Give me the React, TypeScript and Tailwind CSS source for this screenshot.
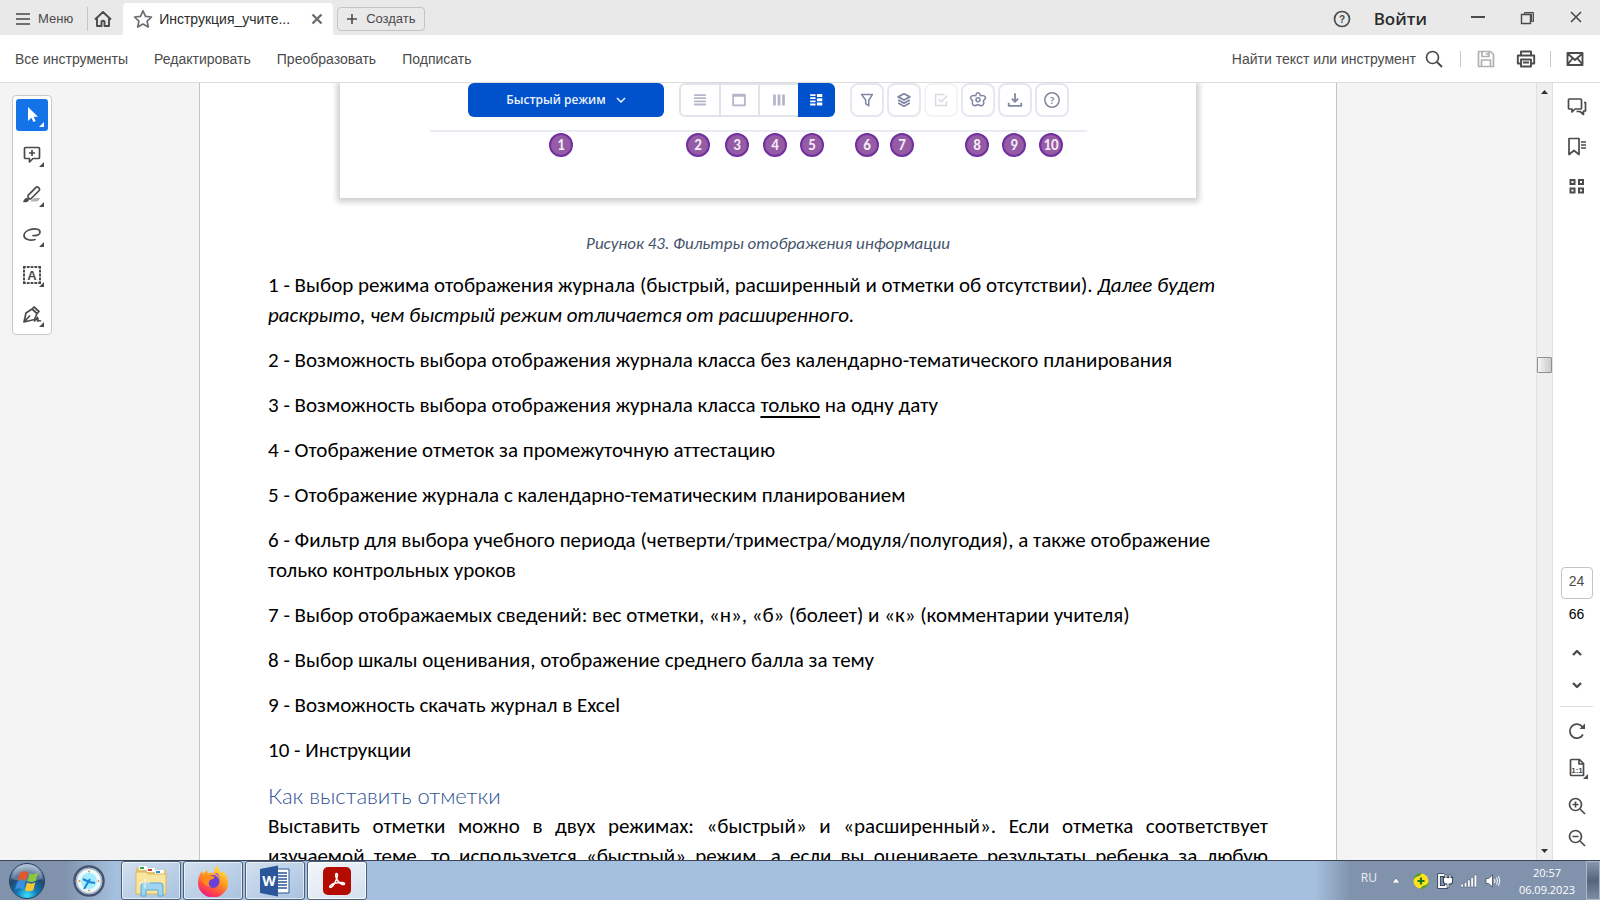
import React from 'react';

type IconProps = { children: React.ReactNode; size?: number; className?: string };

const Icon: React.FC<IconProps> = ({ children, size = 20, className = '' }) => (
  <svg
    width={size}
    height={size}
    viewBox="0 0 20 20"
    fill="none"
    stroke="currentColor"
    strokeWidth="1.7"
    strokeLinejoin="round"
    className={`shrink-0 ${className}`}
    aria-hidden="true"
  >
    {children}
  </svg>
);

const menuItems = ['Все инструменты', 'Редактировать', 'Преобразовать', 'Подписать'];

// Left floating palette
const tools = [
  {
    label: 'Выделение',
    icon: <path d="M6 2v14l3.300-3.200L11.500 17l2.200-1-2-4.200H16z" fill="currentColor" stroke="none" />,
  },
  {
    label: 'Комментарий',
    icon: (
      <>
        <path d="M3.500 2.500h13q1 0 1 1v9q0 1-1 1h-5.500L7.500 17v-3.500h-4q-1 0-1-1v-9q0-1 1-1z" />
        <path d="M10 5v6M7 8h6" />
      </>
    ),
  },
  {
    label: 'Маркер',
    icon: (
      <>
        <path d="M8 16.500l4-3.500h6.500l-3 3.500z" fill="#b3b3b3" stroke="none" />
        <path d="M6.300 10.200L14 2.300q1.200-.9 2.200 0l1 1q.9 1.100 0 2.200l-8 8q-1.200.8-2.200 0l-.7-.8q-.9-1.200 0-2.500z" />
        <path d="M1 17q1.500-4.500 4.300-4 2.200.8 1.200 3-1.500 1.800-5.500 1z" fill="currentColor" stroke="none" />
      </>
    ),
  },
  {
    label: 'Рисование',
    icon: <path d="M11 10.500c4 .5 7-.5 7-3.500 0-3-4-3.500-8-2.800-4 .7-8 3-8 6.300 0 4 6 5.500 11 4" strokeLinecap="round" />,
  },
  {
    label: 'Текст',
    icon: (
      <>
        <path d="M1 2h18M1 18h18" strokeDasharray="2.800 1" strokeWidth="2" />
        <path d="M2 1v18M18 1v18" strokeDasharray="2.800 1" strokeWidth="2" />
        <text x="10" y="14.500" textAnchor="middle" fontSize="13" fontWeight="700" fill="currentColor" stroke="none">
          A
        </text>
      </>
    ),
  },
  {
    label: 'Подпись',
    icon: (
      <>
        <path d="M2 17l2-9 6-4 5 4.500-2.500 6zM2 17l6-6.500M10 4l2-2 5 4.500-2 2" />
        <path d="M12 16.500q3-3 3.500-4 1 1 0 3.500 1.500-.5 3.500 0" />
      </>
    ),
  },
];

const callouts = [
  { n: 1, x: 221 },
  { n: 2, x: 358 },
  { n: 3, x: 397 },
  { n: 4, x: 435 },
  { n: 5, x: 472 },
  { n: 6, x: 527 },
  { n: 7, x: 562 },
  { n: 8, x: 637 },
  { n: 9, x: 674 },
  { n: 10, x: 711 },
];

const viewButtons = [
  { label: 'Список', icon: <path d="M3.500 4.500h13M3.500 8h13M3.500 11.500h13M3.500 15h13" strokeWidth="2" /> },
  { label: 'Дата', icon: <path d="M3.500 4h13v12h-13zM3.500 5.500h13" strokeWidth="2" /> },
  { label: 'Аттестация', icon: <path d="M5 4v12M10 4v12M15 4v12" strokeWidth="3" /> },
  {
    label: 'Журнал с планированием',
    icon: (
      <>
        <path d="M3.500 4.500h6M3.500 8h6M3.500 11.500h6M3.500 15h6" strokeWidth="2" />
        <path d="M11 5h6M11 9.800h6M11 14.500h6" strokeWidth="3.400" />
      </>
    ),
  },
];

const actionButtons = [
  { label: 'Фильтр', icon: <path d="M4 4h12l-4 6v6.500L8.500 14v-4z" /> },
  {
    label: 'Сведения',
    icon: <path d="M10 3l6.500 3.500L10 10 3.500 6.500zM3.500 10l6.500 3.500 6.500-3.500M3.500 13.300L10 17l6.500-3.700" strokeWidth="2" />,
  },
  { label: 'Контроль', icon: <path d="M14 4H4v12h12v-5M7.500 9l3 3L17 5" />, faded: true },
  {
    label: 'Шкала',
    icon: (
      <>
        <path d="M10 2q1.800 0 2.500 3.200 4.500-.7 5.500 1.300t-2 4.300q1 3.700-.8 5T10 15q-3.500 2-5.200.8T4 10.800Q1 8.500 2 6.500t5.500-1.300Q8.200 2 10 2z" />
        <circle cx="10" cy="9.800" r="2.200" />
      </>
    ),
  },
  { label: 'Скачать', icon: <path d="M10 2.500V12M6.500 8.500L10 12l3.500-3.500M3 13v3.500h14V13" strokeWidth="2" /> },
  {
    label: 'Инструкции',
    icon: (
      <>
        <circle cx="10" cy="10" r="8" />
        <text x="10" y="14" textAnchor="middle" fontSize="12" fontWeight="700" fill="currentColor" stroke="none">
          ?
        </text>
      </>
    ),
  },
];

const paragraphs: React.ReactNode[] = [
  <>
    1 - Выбор режима отображения журнала (быстрый, расширенный и отметки об отсутствии).{' '}
    <em>
      Далее будет
      <br />
      раскрыто, чем быстрый режим отличается от расширенного.
    </em>
  </>,
  '2 - Возможность выбора отображения журнала класса без календарно-тематического планирования',
  <>
    3 - Возможность выбора отображения журнала класса <u className="underline-offset-4">только</u> на одну дату
  </>,
  '4 - Отображение отметок за промежуточную аттестацию',
  '5 - Отображение журнала с календарно-тематическим планированием',
  <>
    6 - Фильтр для выбора учебного периода (четверти/триместра/модуля/полугодия), а также отображение
    <br />
    только контрольных уроков
  </>,
  '7 - Выбор отображаемых сведений: вес отметки, «н», «б» (болеет) и «к» (комментарии учителя)',
  '8 - Выбор шкалы оценивания, отображение среднего балла за тему',
  '9 - Возможность скачать журнал в Excel',
  '10 - Инструкции',
];

const TitleBar = () => (
  <header className="flex h-[35px] shrink-0 items-end bg-[#e9e9e9] text-[#4b4b4b]">
    <button className="ml-4 flex h-8 items-center gap-2 text-[13px]">
      <svg width="14" height="14" viewBox="0 0 14 14" stroke="#6e6e6e" strokeWidth="2" aria-hidden="true">
        <path d="M0 2h14M0 7h14M0 12h14" />
      </svg>
      Меню
    </button>
    <span className="mb-1 ml-[14px] h-6 w-px bg-[#c6c6c6]" />
    <button className="ml-[5px] flex h-8 items-center" aria-label="Главная">
      <Icon>
        <path d="M2 10.500L10 3l8 7.500M4 9.500v7.500h4.500v-4.500q1.500-1.500 3 0V17H16V9.500" strokeWidth="1.900" />
      </Icon>
    </button>
    <div className="ml-[10px] flex h-8 w-[210px] items-center rounded-t-[4px] bg-white pr-2 pl-[10px]">
      <Icon className="text-[#6e6e6e]">
        <path d="M10 1.800l2.500 5.500 6 .7-4.400 4.100 1.200 5.900-5.300-3-5.300 3 1.200-5.900L1.500 8l6-.7z" />
      </Icon>
      <span className="ml-[6px] flex-1 truncate text-sm text-[#2c2c2c]">Инструкция_учите...</span>
      <button aria-label="Закрыть вкладку" className="flex">
        <svg width="16" height="16" viewBox="0 0 16 16" stroke="#6e6e6e" strokeWidth="2.400" aria-hidden="true">
          <path d="M3.500 3.500l9 9M12.500 3.500l-9 9" />
        </svg>
      </button>
    </div>
    <button className="mb-1 ml-1 flex h-6 items-center gap-2 rounded-[4px] border border-[#c4c4c4] px-2 text-[13px]">
      <svg width="12" height="12" viewBox="0 0 12 12" stroke="currentColor" strokeWidth="1.600" aria-hidden="true">
        <path d="M6 1v10M1 6h10" />
      </svg>
      Создать
    </button>
    <div className="ml-auto flex h-8 items-center pr-4">
      <button aria-label="Справка" className="flex">
        <Icon>
          <circle cx="10" cy="10" r="7.500" />
          <text x="10" y="13.500" textAnchor="middle" fontSize="10" fontWeight="700" fill="currentColor" stroke="none">
            ?
          </text>
        </Icon>
      </button>
      <button className="ml-[22px] font-['Open_Sans',sans-serif] text-[17px] font-semibold text-[#2c2c2c]">Войти</button>
      <button aria-label="Свернуть" className="ml-[43px] flex">
        <svg width="16" height="16" viewBox="0 0 16 16" stroke="currentColor" strokeWidth="2" aria-hidden="true">
          <path d="M1 6h14" />
        </svg>
      </button>
      <button aria-label="Развернуть" className="ml-[34px] flex">
        <svg width="16" height="16" viewBox="0 0 16 16" fill="none" stroke="currentColor" aria-hidden="true">
          <path d="M4.500 1.500h9v9h-2v-7h-7z" fill="#a9a9a9" />
          <path d="M1.500 3.500h9v9h-9z" strokeWidth="1.400" />
        </svg>
      </button>
      <button aria-label="Закрыть" className="ml-8 flex">
        <svg width="16" height="16" viewBox="0 0 16 16" stroke="currentColor" strokeWidth="1.600" aria-hidden="true">
          <path d="M3 1l10 10M13 1L3 11" />
        </svg>
      </button>
    </div>
  </header>
);

const Toolbar = () => (
  <nav className="flex h-12 shrink-0 items-center border-b border-[#dcdcdc] bg-white pr-[15px] pl-[15px] text-[#4b4b4b]">
    <div className="flex gap-[26px] text-sm">
      {menuItems.map(item => (
        <button key={item}>{item}</button>
      ))}
    </div>
    <div className="ml-auto flex items-center">
      <button className="flex items-center gap-2 text-sm">
        Найти текст или инструмент
        <Icon>
          <circle cx="8.500" cy="8.500" r="6" />
          <path d="M13 13l5 5" strokeWidth="2" />
        </Icon>
      </button>
      <span className="ml-4 h-4 w-px bg-[#c6c6c6]" />
      <button aria-label="Сохранить" className="ml-[15px] flex text-[#b1b1b1]" disabled>
        <Icon>
          <path d="M2.500 2.500h12l3 3v12h-15zM6 2.500v5h7v-5M5.500 17.500v-6.500h9v6.500M11 4v2" />
        </Icon>
      </button>
      <button aria-label="Печать" className="ml-5 flex">
        <Icon>
          <path d="M5 6V2.500h10V6M5 14.500H1.800V6.500h16.400v8H15M5 10.500h10v7H5zM7 13.500h6" strokeWidth="1.900" />
        </Icon>
      </button>
      <span className="ml-[14px] h-4 w-px bg-[#c6c6c6]" />
      <button aria-label="Отправить" className="ml-[14px] flex">
        <Icon>
          <path d="M2.500 4h15v12h-15zM2.500 4.500l7.500 6.500 7.500-6.500M2.500 15.500l5-6M17.500 15.500l-5-6" strokeWidth="1.900" />
        </Icon>
      </button>
    </div>
  </nav>
);

const ToolPalette = () => (
  <aside className="absolute top-3 left-3 flex w-10 flex-col gap-2 rounded-[4px] border border-[#c9c9c9] bg-white p-[3px]">
    {tools.map((tool, i) => (
      <button
        key={tool.label}
        aria-label={tool.label}
        className={
          i === 0
            ? 'relative flex h-8 items-center justify-center rounded-[3px] bg-[#1473e6] text-white'
            : 'relative flex h-8 items-center justify-center text-[#4b4b4b]'
        }
      >
        <Icon>{tool.icon}</Icon>
        <svg width="5" height="5" viewBox="0 0 5 5" className="absolute right-1 bottom-1" fill="currentColor" aria-hidden="true">
          <path d="M5 0v5H0z" />
        </svg>
      </button>
    ))}
  </aside>
);

const Figure = () => (
  <figure className="text-center">
    <div className="relative mx-auto h-[115px] max-w-[856px] bg-white shadow-[0_1px_6px_3px_rgba(0,0,0,0.2)]">
      <div className="mr-[109px] ml-[90px] flex h-[49px] items-start border-b-2 border-[#ebebf3] pl-[38px]">
        <button className="flex h-[34px] w-[196px] shrink-0 items-center justify-center gap-[10px] rounded-[6px] bg-[#0052cc] font-['Open_Sans',sans-serif] text-[12px] font-semibold text-[#e9f0fb]">
          Быстрый режим
          <svg width="10" height="6" viewBox="0 0 10 6" fill="none" stroke="currentColor" strokeWidth="1.500" aria-hidden="true">
            <path d="M1 1l4 4 4-4" />
          </svg>
        </button>
        <div className="ml-[15px] flex h-[34px] w-[156px] shrink-0 text-[#b3b6c9]">
          {viewButtons.map((b, i) => (
            <button
              key={b.label}
              aria-label={b.label}
              className={
                i === 3
                  ? 'flex flex-1 items-center justify-center rounded-r-[6px] bg-[#0052cc] text-white'
                  : 'flex flex-1 items-center justify-center border-y-2 border-l-2 border-[#e3e3ec] first:rounded-l-[6px]'
              }
            >
              <Icon size={18}>{b.icon}</Icon>
            </button>
          ))}
        </div>
        <div className="ml-[15px] flex gap-[3px]">
          {actionButtons.map(b => (
            <button
              key={b.label}
              aria-label={b.label}
              className={
                b.faded
                  ? 'flex h-[34px] w-[34px] items-center justify-center rounded-[8px] border-2 border-[#f4f4f8] text-[#d9dbe4]'
                  : 'flex h-[34px] w-[34px] items-center justify-center rounded-[8px] border-2 border-[#e6e6ef] text-[#8288a3]'
              }
            >
              <Icon size={18}>{b.icon}</Icon>
            </button>
          ))}
        </div>
      </div>
      {callouts.map(c => (
        <span
          key={c.n}
          style={{ left: c.x }}
          className="absolute top-[50px] flex h-6 w-6 -translate-x-1/2 items-center justify-center rounded-full border-2 border-[#7030a0] bg-[#955ba5] font-[Carlito,Lato,sans-serif] text-[15px] leading-none font-bold text-[#f3eaf6]"
        >
          {c.n}
        </span>
      ))}
    </div>
    <figcaption className="mt-[34px] text-[17px] leading-6 text-[#44546a] italic">
      Рисунок 43. Фильтры отображения информации
    </figcaption>
  </figure>
);

const DocumentPage = () => (
  <main className="mx-auto h-full w-3/4 max-w-[1138px] overflow-hidden border-x border-[#c4c4c4] bg-white px-[68px] font-[Carlito,Lato,sans-serif] text-black">
    <Figure />
    <div className="mt-[14px] flex flex-col gap-[15px] text-[21px] leading-[30px]">
      {paragraphs.map((p, i) => (
        <p key={i}>{p}</p>
      ))}
    </div>
    <h2 className="mt-4 font-[Lato,sans-serif] text-[22px] leading-[30px] font-light text-[#2f5496]">
      Как выставить отметки
    </h2>
    <p className="text-justify text-[21px] leading-[30px] [text-align-last:justify]">
      Выставить отметки можно в двух режимах: «быстрый» и «расширенный». Если отметка соответствует
      <br />
      изучаемой теме, то используется «быстрый» режим, а если вы оцениваете результаты ребенка за любую
    </p>
  </main>
);

const ScrollBar = () => (
  <div className="flex w-[17px] shrink-0 flex-col items-center border-x border-[#e0e0e0] bg-[#efefef]">
    <svg width="7" height="4" viewBox="0 0 7 4" className="mt-[7px]" fill="#333" aria-hidden="true">
      <path d="M3.500 0L7 4H0z" />
    </svg>
    <div className="basis-[263px]" />
    <div className="h-4 w-[15px] rounded-[1px] border border-[#8f8f8f] bg-linear-to-r from-[#f5f5f5] to-[#c9cacc]" />
    <svg width="7" height="4" viewBox="0 0 7 4" className="mt-auto mb-[7px]" fill="#333" aria-hidden="true">
      <path d="M3.500 4L7 0H0z" />
    </svg>
  </div>
);

const SidePanel = () => (
  <aside className="flex w-[47px] shrink-0 flex-col items-center bg-white text-[#4b4b4b]">
    <div className="mt-[14px] flex flex-col gap-5">
      <button aria-label="Комментарии" className="flex">
        <Icon>
          <path d="M2.500 2h11q1 0 1 1v8q0 1-1 1H8l-3 3v-3H2.500q-1 0-1-1V3q0-1 1-1z" />
          <path d="M17 5.500h1.500v8.500h-2v3.500L13 14.500H9.500" />
        </Icon>
      </button>
      <button aria-label="Закладки" className="flex">
        <Icon>
          <path d="M2 1.500h10v16l-5-4-5 4z" />
          <path d="M14 5h5M14 8h5M14 11h5" strokeWidth="1.500" />
        </Icon>
      </button>
      <button aria-label="Миниатюры" className="flex">
        <Icon>
          <path d="M3.500 3h4v4h-4zM12 3h4v4h-4zM3.500 11.500h4v4h-4zM12 11.500h4v4h-4z" strokeWidth="2" strokeLinejoin="miter" />
        </Icon>
      </button>
    </div>
    <div className="mt-auto flex flex-col items-center pb-3">
      <input
        aria-label="Номер страницы"
        defaultValue="24"
        className="h-8 w-8 rounded-[4px] border border-[#c4c4c4] pb-1 text-center text-sm text-[#4b4b4b]"
      />
      <span className="mt-[5px] text-sm text-black">66</span>
      <button aria-label="Предыдущая страница" className="mt-[18px] flex">
        <Icon>
          <path d="M6 13l4-4 4 4" strokeWidth="2.400" />
        </Icon>
      </button>
      <button aria-label="Следующая страница" className="mt-3 flex">
        <Icon>
          <path d="M6 9l4 4 4-4" strokeWidth="2.400" />
        </Icon>
      </button>
      <span className="mt-3 h-px w-[33px] bg-[#dcdcdc]" />
      <button aria-label="Повернуть" className="mt-[14px] flex">
        <Icon>
          <path d="M16 13.500A7 7 0 1 1 15.500 6" />
          <path d="M12.500 8H18V2.500z" fill="currentColor" stroke="none" />
        </Icon>
      </button>
      <button aria-label="Реальный размер" className="relative mt-[17px] flex">
        <Icon>
          <path d="M4.500 1.500h8l4 4v12h-12q-1 0-1-1v-14q0-1 1-1zM12 2v4h4" />
          <text x="10" y="14.500" textAnchor="middle" fontSize="8" fontWeight="700" fill="currentColor" stroke="none">
            1:1
          </text>
        </Icon>
        <svg width="5" height="5" viewBox="0 0 5 5" className="absolute -right-px -bottom-px" fill="currentColor" aria-hidden="true">
          <path d="M5 0v5H0z" />
        </svg>
      </button>
      <button aria-label="Увеличить" className="mt-[18px] flex">
        <Icon>
          <circle cx="8.500" cy="8.500" r="6" />
          <path d="M13 13l5 5M5.500 8.500h6M8.500 5.500v6" />
        </Icon>
      </button>
      <button aria-label="Уменьшить" className="mt-3 flex">
        <Icon>
          <circle cx="8.500" cy="8.500" r="6" />
          <path d="M13 13l5 5M5.500 8.500h6" />
        </Icon>
      </button>
    </div>
  </aside>
);

const StartOrb = () => (
  <svg width="38" height="38" viewBox="0 0 38 38" aria-hidden="true">
    <defs>
      <radialGradient id="orb" cx="50%" cy="92%" r="85%">
        <stop offset="0" stopColor="#3fe0ff" />
        <stop offset=".35" stopColor="#1279b5" />
        <stop offset=".7" stopColor="#23466f" />
        <stop offset="1" stopColor="#8fa9c2" />
      </radialGradient>
    </defs>
    <circle cx="19" cy="19" r="17.500" fill="url(#orb)" stroke="#26415f" />
    <path d="M4 17A15 15 0 0 1 34 17Q19 22 4 17z" fill="#fff" opacity=".25" />
    <path d="M12 11q4-3 8-.5l-2 8q-4-2.500-8.300.3z" fill="#e8562a" />
    <path d="M21.500 11.300q4 2 8.500-.8l-2.200 8.200q-4.300 2.500-8.300.2z" fill="#8cc63f" />
    <path d="M9.200 20.200q4.300-2.700 8.300-.4l-2 7.700q-4-2.500-8.500 0z" fill="#3f8fe0" />
    <path d="M19 20.500q4 2.300 8.300 0l-2 7.500q-4.300 2.500-8.300.2z" fill="#fcc732" />
  </svg>
);

const ClockIcon = () => (
  <svg width="32" height="32" viewBox="0 0 32 32" aria-hidden="true">
    <circle cx="16" cy="16" r="14.500" fill="#d7f4ff" stroke="#46536f" strokeWidth="2.500" />
    <circle cx="16" cy="16" r="12.500" fill="#e9fbff" stroke="#aab5ca" strokeWidth="1.500" />
    <circle cx="16" cy="16" r="8" fill="#a5ebff" />
    <g fill="#f0912d">
      <circle cx="16" cy="6.500" r="1" />
      <circle cx="25.500" cy="16" r="1" />
      <circle cx="16" cy="25.500" r="1" />
      <circle cx="6.500" cy="16" r="1" />
    </g>
    <path d="M11 24l6-10M10 14l6 3 6 1" fill="none" stroke="#1b86d3" strokeWidth="2" />
  </svg>
);

const FolderIcon = () => (
  <svg width="34" height="34" viewBox="0 0 34 34" aria-hidden="true">
    <path d="M2 4h8l2 2h20v24H2z" fill="#e3c66b" />
    <path d="M5 2h8v4H5z" fill="#fff" />
    <path d="M6 3h4v2H6z" fill="#35a53a" />
    <path d="M13 4h8v4h-8z" fill="#fff" />
    <path d="M14 5h4v2h-4z" fill="#d93a2b" />
    <path d="M21 6h9v4h-9z" fill="#fff" />
    <path d="M22 7h4v2h-4z" fill="#2b8fe0" />
    <path d="M2 8h10l2 2h18v20H2z" fill="#f8e6a0" stroke="#d9b95c" />
    <path d="M7 32V22q0-3 3-3h16q3 0 3 3v10h-5v-6H12v6z" fill="#9fd4ee" stroke="#5ba7d0" />
    <path d="M11 14v10M6 19h10" stroke="#fff" opacity=".8" />
  </svg>
);

const FirefoxIcon = () => (
  <svg width="32" height="32" viewBox="0 0 32 32" aria-hidden="true">
    <defs>
      <linearGradient id="fox" x1=".8" y1="0" x2=".3" y2="1">
        <stop offset="0" stopColor="#fff04a" />
        <stop offset=".45" stopColor="#ff9a1f" />
        <stop offset=".8" stopColor="#ff3f4e" />
        <stop offset="1" stopColor="#e51a8a" />
      </linearGradient>
    </defs>
    <path d="M20 0q1 5 5 8l1-2q5 5 5 12a15 14.500 0 0 1-30 0Q1 11 5 6l1 3 4-4 1 3q4-1 6 0Q17 3 20 0z" fill="url(#fox)" />
    <circle cx="16" cy="16.500" r="6.500" fill="#6b3fd6" />
    <path d="M4 13q5-5 11-2l3 1q-2 3-5 3-3 4 1 7-8-1-10-9z" fill="#ff8a1c" />
    <path d="M17 9q5 0 6 6 0-5-3-7z" fill="#a34ff0" />
  </svg>
);

const WordIcon = () => (
  <svg width="32" height="32" viewBox="0 0 32 32" aria-hidden="true">
    <path d="M17 4h13v24H17z" fill="#fff" stroke="#2b579a" />
    <path d="M19 8h9M19 11h9M19 14h9M19 17h9M19 20h9M19 23h9" stroke="#2b579a" strokeWidth="1.300" />
    <path d="M1 4l18-3.500v31L1 28z" fill="#2b579a" />
    <text x="10" y="21" textAnchor="middle" fontSize="14" fontWeight="700" fill="#fff">
      W
    </text>
  </svg>
);

const AcrobatIcon = () => (
  <svg width="30" height="30" viewBox="0 0 30 30" aria-hidden="true">
    <rect x="1" y="1" width="28" height="28" rx="5" fill="#b30b00" />
    <path
      d="M14.500 7.500c1.800 0 .8 5-1.300 8.700-1.700 3.200-3.700 5.600-5 5.200-1.500-.6.500-3 5.500-4.300 4-1 8.600-1 8.800.5.200 1.800-3.300 1-5.800-1.600-2.700-2.800-4-8.500-2.200-8.500z"
      fill="none"
      stroke="#fff"
      strokeWidth="1.500"
    />
  </svg>
);

const taskButtons = [
  { label: 'Проводник', icon: <FolderIcon /> },
  { label: 'Firefox', icon: <FirefoxIcon /> },
  { label: 'Word', icon: <WordIcon /> },
  { label: 'Acrobat', icon: <AcrobatIcon />, active: true },
];

const Taskbar = () => (
  <footer className="flex h-10 shrink-0 items-stretch border-t border-[#3a4655] bg-[linear-gradient(90deg,#8193ac_0,#8193ac_65px,#a4c0de_115px,#a4c0de_calc(100%_-_285px),#8193ac_calc(100%_-_250px))] font-['Open_Sans',sans-serif]">
    <button aria-label="Пуск" className="ml-2 flex items-center">
      <StartOrb />
    </button>
    <button aria-label="Часы" className="ml-[27px] flex items-center">
      <ClockIcon />
    </button>
    <div className="ml-4 flex gap-[2px]">
      {taskButtons.map(b => (
        <button
          key={b.label}
          aria-label={b.label}
          className={
            b.active
              ? 'flex w-[60px] items-center justify-center rounded-[3px] border border-[#4e6078] bg-linear-to-br from-[#f4f7fb] to-[#d3dfee] shadow-[inset_0_0_0_1px_rgba(255,255,255,0.8)]'
              : 'flex w-[60px] items-center justify-center rounded-[3px] border border-[#4e6078] bg-linear-to-br from-[#d3e0ef] to-[#a9c2df] shadow-[inset_0_0_0_1px_rgba(255,255,255,0.6)]'
          }
        >
          {b.icon}
        </button>
      ))}
    </div>
    <div className="ml-auto flex items-center text-white">
      <span className="pb-[6px] text-[12px] text-[#e8edf3]">RU</span>
      <svg width="8" height="5" viewBox="0 0 8 5" className="ml-[15px]" aria-hidden="true">
        <path d="M4 0l4 5H0z" fill="#fff" stroke="#3c4b60" strokeWidth=".5" />
      </svg>
      <svg width="16" height="16" viewBox="0 0 16 16" className="ml-[13px]" aria-hidden="true">
        <circle cx="8" cy="8" r="7.500" fill="#ffe11a" />
        <path d="M0 7a8 8 0 0 1 9-6.800L6.500 3Q2.500 3.500 0 7zM16 9a8 8 0 0 1-9 6.800L9.500 13q4-.5 6.500-4z" fill="#4f9e2f" />
        <path d="M8 4.500v7M4.500 8h7" stroke="#157a1e" strokeWidth="2.200" />
      </svg>
      <svg width="16" height="16" viewBox="0 0 16 16" className="ml-2" fill="none" aria-hidden="true">
        <path d="M7 2H2v12h7v-3" stroke="#2f3b4c" strokeWidth="3.500" />
        <path d="M7 2H2v12h7v-3" stroke="#fff" strokeWidth="1.800" />
        <path d="M7 5h8v3q0 2.500-2.500 2.500h-3Q7 10.500 7 8zM9 1v4M13 1v4M11 10.500V15" fill="#fff" stroke="#2f3b4c" strokeWidth="2.400" />
        <path d="M7.500 5.500h7V8q0 2-2 2h-3q-2 0-2-2zM9 1.500V5M13 1.500V5M11 10v4.500" fill="#fff" stroke="#fff" strokeWidth="1.200" />
      </svg>
      <svg width="16" height="14" viewBox="0 0 16 14" className="ml-2" fill="#fff" stroke="#45556c" strokeWidth=".5" aria-hidden="true">
        <path d="M0 10h2.500v3H0zM3.300 8.500h2.500V13H3.300zM6.600 6h2.500v7H6.600zM9.900 3.500h2.500V13H9.900zM13.200 1h2.500v12h-2.500z" />
      </svg>
      <svg width="16" height="16" viewBox="0 0 16 16" className="ml-2" fill="none" stroke="#fff" aria-hidden="true">
        <path d="M1 5.500h2.500L7.500 2v12l-4-3.500H1z" fill="#fff" stroke="#2f3b4c" strokeWidth=".7" />
        <path d="M9.500 6q1 2 0 4M11.500 4.500q2 3.500 0 7M13.500 3q2.600 5 0 10" />
      </svg>
      <time className="ml-[18px] text-center text-[11px] leading-[17px]">
        20:57
        <br />
        06.09.2023
      </time>
      <button
        aria-label="Показать рабочий стол"
        className="ml-[11px] h-full w-[14px] border border-[#aab8ca] bg-linear-to-b from-[#8796aa] via-[#56657c] to-[#7c8ca3]"
      />
    </div>
  </footer>
);

export default function App() {
  return (
    <div className="flex h-screen flex-col overflow-hidden bg-white font-['Liberation_Sans',Arial,sans-serif]">
      <TitleBar />
      <Toolbar />
      <div className="flex min-h-0 flex-1">
        <div className="relative min-w-0 flex-1 overflow-hidden bg-[#f4f4f4]">
          <DocumentPage />
          <ToolPalette />
        </div>
        <ScrollBar />
        <SidePanel />
      </div>
      <Taskbar />
    </div>
  );
}
